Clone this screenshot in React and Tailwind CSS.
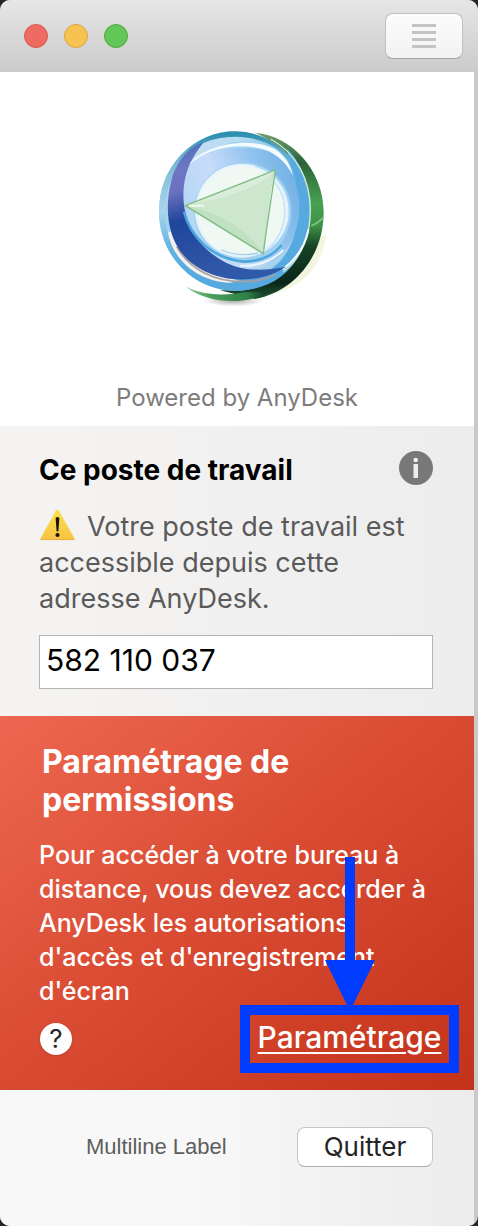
function Logo() {
  return (
    <svg viewBox="-9 0 600 600" className="size-[200px]" role="img" aria-label="Logo">
      <defs>
        <linearGradient id="navy" x1="0" y1="0" x2="0.3" y2="1">
          <stop offset="0" stopColor="#3f6cb4" />
          <stop offset="0.2" stopColor="#6f76c4" />
          <stop offset="0.35" stopColor="#6a70c0" />
          <stop offset="0.55" stopColor="#20469b" />
          <stop offset="1" stopColor="#3159a9" />
        </linearGradient>
        <linearGradient id="green" x1="0" y1="0" x2="0" y2="1">
          <stop offset="0" stopColor="#6fa070" />
          <stop offset="0.18" stopColor="#2c6238" />
          <stop offset="0.42" stopColor="#48a050" />
          <stop offset="0.56" stopColor="#3f9348" />
          <stop offset="0.68" stopColor="#174525" />
          <stop offset="0.9" stopColor="#0c2418" />
          <stop offset="1" stopColor="#1f5a36" />
        </linearGradient>
        <linearGradient id="foot" x1="0" y1="0" x2="1" y2="0">
          <stop offset="0" stopColor="#8fcf92" />
          <stop offset="0.3" stopColor="#4aa05a" />
          <stop offset="0.75" stopColor="#2f8048" />
          <stop offset="1" stopColor="#12301f" />
        </linearGradient>
        <linearGradient id="rim" x1="0" y1="0" x2="0" y2="1">
          <stop offset="0" stopColor="#2f8fae" />
          <stop offset="0.2" stopColor="#7dbbd6" />
          <stop offset="0.5" stopColor="#a9d4ea" />
          <stop offset="0.75" stopColor="#62b2e2" />
          <stop offset="1" stopColor="#4ea8df" />
        </linearGradient>
        <linearGradient id="cap" x1="0" y1="0" x2="1" y2="0">
          <stop offset="0" stopColor="#c6dcf3" />
          <stop offset="0.5" stopColor="#b3dcf4" />
          <stop offset="1" stopColor="#6bb4e2" />
        </linearGradient>
        <linearGradient id="sky" x1="0" y1="0.6" x2="1" y2="0.2">
          <stop offset="0" stopColor="#b3d5f5" />
          <stop offset="0.35" stopColor="#c8dcfa" />
          <stop offset="0.7" stopColor="#8fc2ee" />
          <stop offset="1" stopColor="#6eaee2" />
        </linearGradient>
        <radialGradient id="shade">
          <stop offset="0" stopColor="#777777" stopOpacity="0.6" />
          <stop offset="1" stopColor="#777777" stopOpacity="0" />
        </radialGradient>
      </defs>

      {/* soft shadow and outer green crescent */}
      <ellipse cx="280" cy="558" rx="90" ry="16" fill="url(#shade)" />
      <path d="M558 360C550 445 490 515 405 535C470 490 520 430 540 365Z" fill="#f3f6de" />
      <path d="M345 53C455 62 550 165 551 290C552 420 465 530 345 552L240 526C400 526 505 410 508 290C506 180 440 95 345 53Z" fill="url(#green)" />
      <path d="M136 514C175 536 240 546 310 532L385 532C330 566 210 574 136 514Z" fill="url(#foot)" />
      <path d="M514 332Q535 324 550 308" fill="none" stroke="#7cc67f" strokeWidth="5" />

      {/* glass ball */}
      <ellipse cx="284" cy="288" rx="227" ry="239" fill="#a5d2ed" />
      <ellipse cx="284" cy="288" rx="218" ry="230" fill="none" stroke="url(#rim)" strokeWidth="18" />
      <path d="M440 100C490 150 510 220 510 288C510 410 440 525 290 527C220 525 160 490 120 445C190 500 300 510 380 470C470 420 490 300 458 185Z" fill="#57aae0" />
      <path d="M190 84C260 55 350 60 410 100C450 130 470 180 470 230L140 230C140 170 160 115 190 84Z" fill="url(#cap)" />
      <path d="M140 162C190 95 330 85 400 115C440 135 456 165 462 190C505 300 460 420 370 455C280 475 190 440 155 350C128 290 125 225 140 162Z" fill="url(#sky)" />
      <path d="M200 118C270 62 370 68 425 122C350 90 270 88 200 118Z" fill="#a3d2ee" />
      <path d="M145 152C185 90 330 62 405 102C440 126 452 152 459 182C440 146 415 122 385 108C310 78 200 98 145 152Z" fill="#f4fbff" />
      <path d="M392 72C470 115 511 195 511 285C511 360 485 430 430 470" fill="none" stroke="#cdebd5" strokeWidth="4" />
      <path d="M505 345C495 395 465 435 430 462" fill="none" stroke="#f4fbff" strokeWidth="6" strokeLinecap="round" />

      {/* navy sweep and its highlight */}
      <path d="M84 350C95 430 170 500 270 503L300 497C200 480 120 430 100 350Z" fill="#f3f1ee" />
      <path d="M110 395C150 465 225 500 310 500C350 499 385 490 405 478" fill="none" stroke="#a99f9c" strokeWidth="5" />
      <path d="M190 82C150 95 112 135 96 190C72 275 82 365 130 420C200 502 345 518 438 455C390 465 340 468 300 458C230 442 165 380 145 325C122 260 128 200 146 155C158 125 174 105 190 82Z" fill="url(#navy)" />

      {/* inner disc */}
      <ellipse cx="308" cy="290" rx="146" ry="148" fill="#9fd0f0" />
      <ellipse cx="306" cy="287" rx="141" ry="141" fill="#e6f4fa" />
      <ellipse cx="302" cy="287" rx="130" ry="134" fill="#f0f8f4" />
      <path d="M345 152C415 175 452 230 448 305C443 360 415 405 370 430" fill="none" stroke="#a7d6f2" strokeWidth="4" />
      <path d="M370 175C420 205 438 250 434 305C428 350 403 392 373 410" fill="none" stroke="#c3e4f6" strokeWidth="4" />
      <path d="M132 290C150 360 210 430 310 440C360 440 400 420 425 390" fill="none" stroke="#4ea7dc" strokeWidth="8" />
      <path d="M300 452C350 456 400 436 430 405" fill="none" stroke="#eaf6fc" strokeWidth="6" />
      <path d="M245 405C285 422 320 422 355 414" fill="none" stroke="#9fd3ef" strokeWidth="4" />

      {/* pointer */}
      <path d="M136 272L406 165C388 240 382 330 370 416Z" fill="#cde7cf" />
      <path d="M136 272L406 165C360 220 250 250 136 272Z" fill="#d9edda" />
      <path d="M136 272C230 288 320 340 370 416Z" fill="#c0e0c2" />
      <path d="M136 272L406 165C396 240 380 330 370 416Z" fill="none" stroke="#7dbd82" strokeWidth="4" strokeLinejoin="round" />
      <path d="M150 272H190" stroke="#eef8ec" strokeWidth="6" strokeLinecap="round" />
    </svg>
  );
}

function MenuIcon() {
  return (
    <svg viewBox="0 0 24 24" className="size-6" fill="#c4c4c4" aria-hidden="true">
      <rect y="0" width="24" height="3" />
      <rect y="7" width="24" height="3" />
      <rect y="14" width="24" height="3" />
      <rect y="21" width="24" height="3" />
    </svg>
  );
}

function InfoIcon() {
  return (
    <svg viewBox="0 0 34 34" className="size-[34px]" aria-hidden="true">
      <circle cx="17" cy="17" r="17" fill="#787878" />
      <circle cx="16.7" cy="9" r="2.3" fill="#efeeee" />
      <rect x="14.5" y="13" width="4.5" height="14" fill="#efeeee" />
    </svg>
  );
}

function WarningIcon() {
  return (
    <svg viewBox="0 0 36 32" className="mr-3 inline-block h-8 w-9 align-[-5px]" role="img" aria-label="Attention">
      <defs>
        <linearGradient id="warn" x1="0" y1="0" x2="0" y2="1">
          <stop offset="0" stopColor="#fde04e" />
          <stop offset="1" stopColor="#f7c444" />
        </linearGradient>
      </defs>
      <path d="M17 1.2Q18.5-.3 19.8 1.2L35.5 29.5Q36 31 34.5 31H2.5Q1 31 1.5 29.5Z" fill="url(#warn)" />
      <path d="M1.5 30.6H35.5" stroke="#eda93f" strokeWidth="0.8" />
      <path d="M16.6 9Q18.5 7 20.4 9L19.4 22Q18.5 23.4 17.6 22Z" fill="#1a1708" />
      <circle cx="18.5" cy="26" r="2.1" fill="#1a1708" />
    </svg>
  );
}

function Arrow() {
  return (
    <svg
      viewBox="0 0 50 150"
      className="pointer-events-none absolute bottom-[56px] left-[75px] h-[150px] w-[50px]"
      fill="#003cff"
      aria-hidden="true"
    >
      <path d="M20 0H30V103H50L27 150H23L0 103H20Z" />
    </svg>
  );
}

function TitleBar() {
  return (
    <header className="flex h-[72px] items-center justify-between bg-linear-to-b from-[#e6e6e6] to-[#cbcbcb] pr-[15px] pl-6">
      <div className="flex gap-4">
        <button type="button" aria-label="Fermer" className="size-6 rounded-full border border-[#d9574b] bg-[#ed6b60]" />
        <button type="button" aria-label="Réduire" className="size-6 rounded-full border border-[#dba544] bg-[#f6c351]" />
        <button type="button" aria-label="Agrandir" className="size-6 rounded-full border border-[#51a73e] bg-[#62c756]" />
      </div>
      <button
        type="button"
        aria-label="Menu"
        className="flex h-[46px] w-[78px] items-center justify-center rounded-lg border border-[#c2c2c2] border-b-[#a4a4a4] bg-linear-to-b from-[#fcfcfc] to-[#f2f2f2]"
      >
        <MenuIcon />
      </button>
    </header>
  );
}

export default function App() {
  return (
    <div className="min-h-screen bg-[#252525] font-['Inter',sans-serif]">
      <div className="flex min-h-screen flex-col overflow-hidden rounded-[10px] bg-[#c9c9c9]">
        <TitleBar />
        <main className="mr-1 flex grow flex-col">
          <section className="flex flex-col items-center bg-white pt-[43px] pb-3 text-[#7c7c7c]">
            <Logo />
            <p className="mt-[66px] text-[24px] leading-[33px]">Powered by AnyDesk</p>
          </section>

          <section className="bg-linear-to-r from-[#f5f4f2] to-[#eeedee] pt-[25px] pr-[41px] pb-[27px] pl-[39px]">
            <div className="flex items-start justify-between">
              <h1 className="text-[28px] leading-[38px] font-bold text-black">Ce poste de travail</h1>
              <button type="button" aria-label="Informations">
                <InfoIcon />
              </button>
            </div>
            <p className="mt-5 text-[27px] leading-9 text-[#5a5a5a]">
              <WarningIcon />
              Votre poste de travail est accessible depuis cette adresse AnyDesk.
            </p>
            <input
              type="text"
              readOnly
              aria-label="Adresse AnyDesk"
              defaultValue="582 110 037"
              className="mt-[18px] block h-[54px] w-full border border-[#b4b4b4] bg-white px-[6px] pb-1 text-[30px] text-black outline-none"
            />
          </section>

          <section className="bg-linear-to-br from-[#ee6750] via-[#d84a31] to-[#c3321a] pt-[27px] pr-[41px] pb-[17px] pl-[39px] text-white">
            <h2 className="ml-[3px] max-w-[300px] text-[32px] leading-[38px] font-bold">Paramétrage de permissions</h2>
            <p className="mt-[19px] text-[25px] leading-[34px] font-medium">
              Pour accéder à votre bureau à distance, vous devez accorder à AnyDesk les autorisations d'accès et
              d'enregistrement d'écran
            </p>
            <div className="-mt-[3px] -mr-[26px] flex items-center justify-between">
              <button
                type="button"
                aria-label="Aide"
                className="ml-px size-8 rounded-full bg-white text-[26px] leading-8 text-[#262626] shadow-sm"
              >
                ?
              </button>
              <div className="relative flex h-[68px] w-[219px] items-center justify-center border-10 border-[#003cff] pb-1">
                <Arrow />
                <a
                  href="#parametrage"
                  className="text-[30px] leading-10 font-medium underline decoration-2 underline-offset-4"
                >
                  Paramétrage
                </a>
              </div>
            </div>
          </section>

          <footer className="flex grow items-start justify-between bg-linear-to-r from-[#f8f8f8] from-40% to-[#ececec] pt-[37px] pr-[41px] pl-[86px]">
            <p className="font-['Liberation_Sans',sans-serif] text-[22px] leading-10 text-[#5e5e5e]">Multiline Label</p>
            <button
              type="button"
              className="h-10 w-[136px] rounded-lg border border-[#c6c6c6] border-b-[#adadad] bg-white text-[26px] leading-9 text-[#242424]"
            >
              Quitter
            </button>
          </footer>
        </main>
      </div>
    </div>
  );
}
